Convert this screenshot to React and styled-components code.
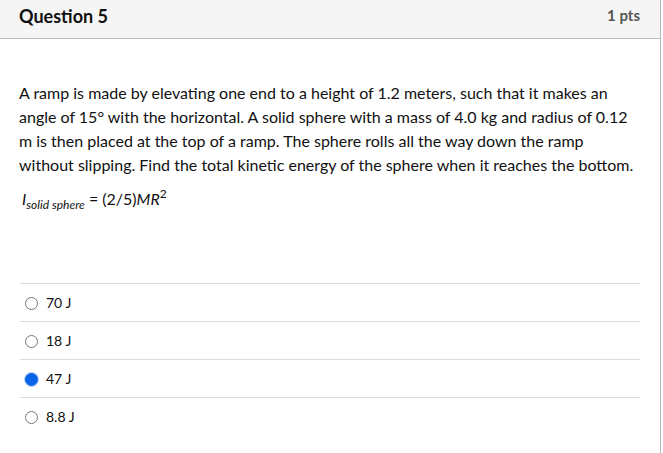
import React from 'react';
import styled, { createGlobalStyle } from 'styled-components';

const GlobalStyle = createGlobalStyle`
  html, body { margin: 0; padding: 0; background: #fff; }
  body { font-family: Lato, "Open Sans", sans-serif; color: #2d3b45; }
`;

const answers = [
  { id: 'a', label: '70 J' },
  { id: 'b', label: '18 J' },
  { id: 'c', label: '47 J', checked: true },
  { id: 'd', label: '8.8 J' },
];

export default function App() {
  return (
    <>
      <GlobalStyle />
      <QuestionCard>
        <Header>
          <Title>Question 5</Title>
          <Points>1 pts</Points>
        </Header>
        <Body>
          <Text>
            A ramp is made by elevating one end to a height of 1.2 meters, such that it makes an
            angle of 15° with the horizontal. A solid sphere with a mass of 4.0 kg and radius of 0.12
            m is then placed at the top of a ramp. The sphere rolls all the way down the ramp
            without slipping. Find the total kinetic energy of the sphere when it reaches the bottom.
          </Text>
          <Formula>
            <i>I</i><sub><i>solid sphere</i></sub> = (2/5)<i>MR</i><sup>2</sup>
          </Formula>
          <Answers>
            {answers.map((a) => (
              <Answer key={a.id}>
                <Radio $checked={a.checked} />
                <AnswerLabel>{a.label}</AnswerLabel>
              </Answer>
            ))}
          </Answers>
        </Body>
      </QuestionCard>
    </>
  );
}

const QuestionCard = styled.div`
  width: 660px;
  height: 453px;
  border-right: 1px solid #aeb4b8;
  box-sizing: content-box;
`;

const Header = styled.div`
  height: 38px;
  display: flex;
  align-items: center;
  justify-content: space-between;
  padding: 0 20px 0 19px;
  background: #f5f5f5;
  border-bottom: 1px solid #b9bec2;
`;

const Title = styled.h2`
  margin: 0;
  font-size: 18px;
  font-weight: 700;
  color: #111;
  line-height: 1;
  margin-top: -7px;
`;

const Points = styled.span`
  font-size: 15px;
  font-weight: 700;
  color: #555;
  line-height: 1;
  margin-top: -7px;
`;

const Body = styled.div`
  padding: 42px 20px 0 19px;
`;

const Text = styled.p`
  margin: 0;
  font-size: 16px;
  line-height: 24px;
  color: #111;
`;

const Formula = styled.p`
  margin: 10px 0 0 3px;
  font-size: 16px;
  line-height: 24px;
  color: #111;
  i { font-style: italic; }
  sub { font-size: 12px; vertical-align: -4px; line-height: 0; }
  sup { font-size: 12px; vertical-align: 7px; line-height: 0; }
`;

const Answers = styled.div`
  margin-top: 72px;
  margin-left: 1px;
`;

const Answer = styled.div`
  height: 38px;
  box-sizing: border-box;
  display: flex;
  align-items: center;
  gap: 8px;
  padding-left: 5px;
  border-top: 1px solid #dcdcdc;
`;

const Radio = styled.span`
  width: 13px;
  height: 13px;
  border-radius: 50%;
  box-sizing: border-box;
  border: 1px solid ${(p) => (p.$checked ? '#0a64e8' : '#767676')};
  background: ${(p) => (p.$checked ? '#0a64e8' : '#fff')};
  box-shadow: ${(p) => (p.$checked ? '0 0 0 1px #b9d3f7' : 'none')};
  margin-top: 2px;
`;

const AnswerLabel = styled.span`
  font-size: 14px;
  color: #111;
`;
